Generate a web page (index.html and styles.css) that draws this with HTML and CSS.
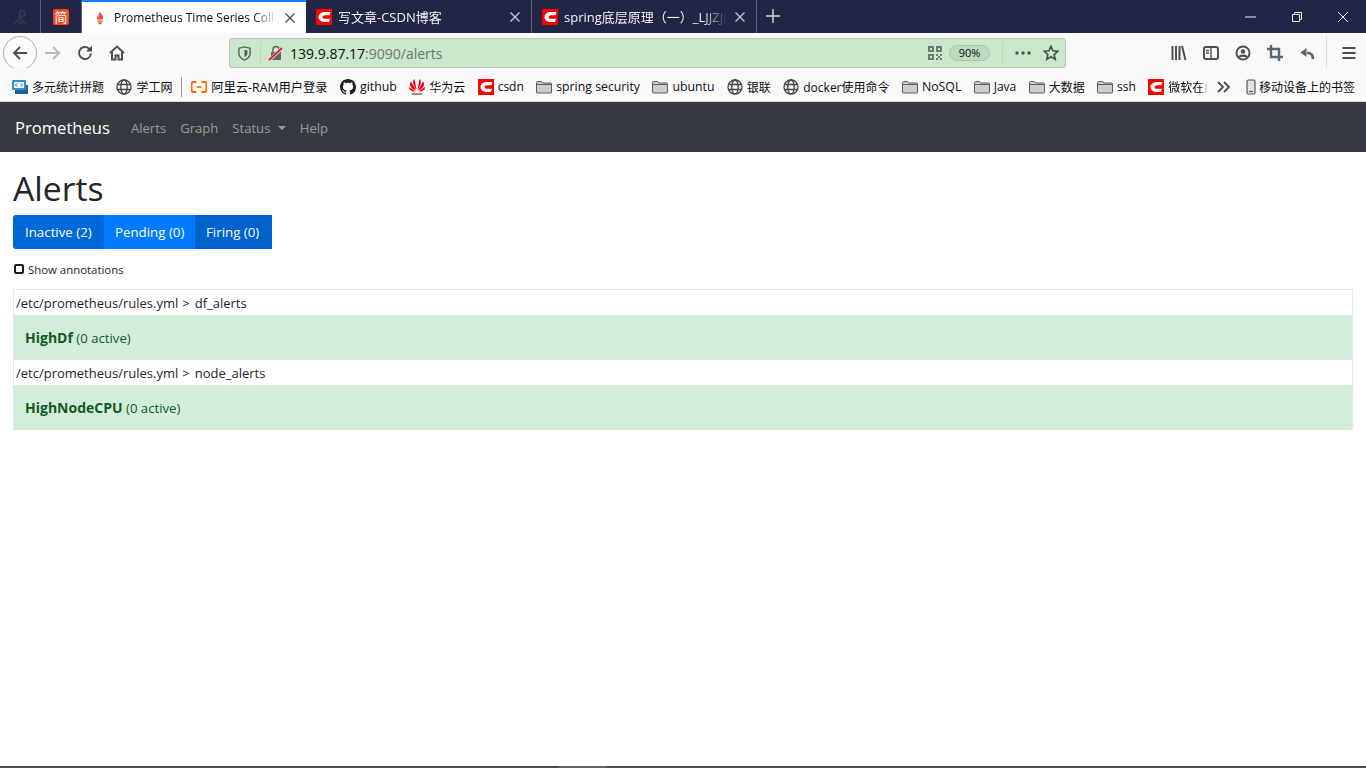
FILE: index.html
```html
<!DOCTYPE html>
<html>
<head>
  <meta charset="UTF-8">
  <title>Prometheus Time Series Collection and Processing Server</title>
  <link rel="stylesheet" href="styles.css">
</head>
<body>
  <svg class="sprites" width="0" height="0">
    <symbol id="csdn" viewBox="0 0 16 16">
      <rect width="16" height="16" fill="#f00"/>
      <path d="M14.500 3H8.500C5.200 3 2.500 5.200 2.500 8s2.700 5 6 5H13l1-3.200H8.800C7.400 9.800 6.500 9 6.500 8s.9-1.800 2.300-1.800h4.700z" fill="#fff"/>
    </symbol>
    <symbol id="globe" viewBox="0 0 16 16">
      <g fill="none" stroke="#444" stroke-width="1.300">
        <circle cx="8" cy="8" r="7"/>
        <ellipse cx="8" cy="8" rx="3.200" ry="7"/>
        <path d="M1.500 5.500h13M1.500 10.500h13"/>
      </g>
    </symbol>
    <symbol id="folder" viewBox="0 0 16 16">
      <path d="M.5 3.500a1 1 0 0 1 1-1h4l1.500 1.500h7.500a1 1 0 0 1 1 1v8a1 1 0 0 1-1 1h-13a1 1 0 0 1-1-1z" fill="#cfcdc9" stroke="#5c5c5c"/>
      <path d="M.5 5.500h15" stroke="#5c5c5c"/>
    </symbol>
  </svg>

  <div class="tabbar">
    <div class="tab tab-pinned">
      <svg class="fav" viewBox="0 0 16 16"><circle cx="10" cy="4.500" r="2.800" fill="none" stroke="#3a3d4d" stroke-width="1.400"/><path d="M1.500 14c3 0 5-2 6.500-6.500 1 3 3 6 6.500 6.500M7 14h4" fill="none" stroke="#3a3d4d" stroke-width="1.400"/></svg>
    </div>
    <div class="tab tab-pinned">
      <span class="jian">简</span>
    </div>
    <div class="tab tab-active">
      <svg class="fav" viewBox="0 0 16 16">
        <circle cx="8" cy="8" r="8" fill="#fff"/>
        <path d="M8 1.500c.4 2 2 2.600 2.700 4.200.7 1.700.2 3.200-.4 3.900H5.700C4.800 8.500 4.700 6.900 5.600 5.700c.3 1 .8 1.200 1 1.200C6.300 5 7 3 8 1.500zM5.300 10.500h5.400v1.300H5.300zM6 12.500h4c0 1.200-.9 2-2 2s-2-.8-2-2z" fill="#e6522c"/>
      </svg>
      <span class="tab-title">Prometheus Time Series Collection and Processing Server</span>
      <svg class="tab-close" viewBox="0 0 10 10"><path d="M.5.500l9 9M9.500.500l-9 9"/></svg>
    </div>
    <div class="tab tab-third">
      <svg class="fav"><use href="#csdn"/></svg>
      <span class="tab-title tab-title-cjk">写文章-CSDN博客</span>
      <svg class="tab-close" viewBox="0 0 10 10"><path d="M.5.500l9 9M9.500.500l-9 9"/></svg>
    </div>
    <div class="tab">
      <svg class="fav"><use href="#csdn"/></svg>
      <span class="tab-title tab-title-cjk">spring底层原理（一）_LJJZJ的博客</span>
      <svg class="tab-close" viewBox="0 0 10 10"><path d="M.5.500l9 9M9.500.500l-9 9"/></svg>
    </div>
    <svg class="new-tab" viewBox="0 0 14 14"><path d="M7 0v14M0 7h14"/></svg>
    <div class="window-controls">
      <svg viewBox="0 0 12 12"><path d="M0 6h11"/></svg>
      <svg viewBox="0 0 12 12"><path d="M1.500 3.500h7v7h-7zM3.500 3.500v-2h7v7h-2"/></svg>
      <svg viewBox="0 0 12 12"><path d="M1 1l10 10M11 1L1 11"/></svg>
    </div>
  </div>

  <div class="toolbar">
    <div class="back-btn">
      <svg viewBox="0 0 16 16"><path d="M15 8H2M8 2L2 8l6 6"/></svg>
    </div>
    <svg class="tool tool-off" viewBox="0 0 16 16"><path d="M0 8h14M8 2l6 6-6 6"/></svg>
    <svg class="tool" viewBox="0 0 16 16"><path d="M14 8.500a6 6 0 1 1-2-5L14.500 5.500"/><path d="M15 .5v6H9z" fill="#4d4f52" stroke="none"/></svg>
    <svg class="tool" viewBox="0 0 16 16"><path d="M1 8l7-6.500L15 8M3 6.500V14.500h3.500v-4h3v4H13V6.500"/></svg>
    <div class="urlbar">
      <svg class="shield" viewBox="0 0 16 16"><path d="M8 1l6 1.500V8c0 3-2.500 5.500-6 7-3.500-1.500-6-4-6-7V2.500z"/><path d="M8 4l3 .8V8c0 1.600-1.300 3-3 4z" fill="#555" stroke="none"/></svg>
      <span class="url-sep"></span>
      <svg class="lock" viewBox="0 0 16 16"><path d="M3 7h10v8H3z" fill="#5d6660"/><path d="M5 7V4.500a3 3 0 0 1 6 0V7" fill="none" stroke="#5d6660" stroke-width="1.500"/><path d="M1 15.500L14.500 2.500" stroke="#cbe8cd" stroke-width="3.200"/><path d="M1 15L14 3" stroke="#f0143c" stroke-width="1.800"/></svg>
      <span class="url"><span class="url-host">139.9.87.17</span>:9090/alerts</span>
      <svg class="qr" viewBox="0 0 14 14"><path d="M0 0h6v6H0zM2 2v2h2V2zM8 0h6v6H8zM10 2v2h2V2zM0 8h6v6H0zM2 10v2h2v-2zM8 8h2v2H8zM12 8h2v2h-2zM10 10h2v2h-2zM8 12h2v2H8zM12 12h2v2h-2z" fill-rule="evenodd"/></svg>
      <span class="zoom-pill">90%</span>
      <span class="url-sep url-sep-right"></span>
      <svg class="dots" viewBox="0 0 16 4"><circle cx="2" cy="2" r="1.700"/><circle cx="8" cy="2" r="1.700"/><circle cx="14" cy="2" r="1.700"/></svg>
      <svg class="star" viewBox="0 0 16 16"><path d="M8 1.300l2 4.500 4.800.5-3.600 3.200 1 4.800L8 11.800l-4.200 2.500 1-4.800L1.200 6.300 6 5.800z"/></svg>
    </div>
    <div class="tools-right">
      <svg class="tool" viewBox="0 0 16 16"><path d="M1.500 1v14M5 1v14M8.500 1v14M11 1l3.500 14"/></svg>
      <svg class="tool" viewBox="0 0 16 16"><rect x="1" y="2" width="14" height="12" rx="2"/><path d="M8 2v12M3 5.500h3M3 8h3" stroke-width="1.400"/></svg>
      <svg class="tool" viewBox="0 0 16 16"><circle cx="8" cy="8" r="6.500" stroke-width="2"/><circle cx="8" cy="6.500" r="2.300" fill="#4d4f52" stroke="none"/><path d="M3.800 12.500c1-2.500 7.400-2.500 8.400 0" stroke-width="2.200"/></svg>
      <svg class="tool tool-slate" viewBox="0 0 16 16"><path d="M4 0v12h12M0 4h12v12" stroke-width="2.400"/></svg>
      <svg class="tool tool-slate" viewBox="0 0 16 16"><path d="M14 14c0-4-2-6-6-6.200" stroke-width="2.600"/><path d="M7.500 3L1.500 7.500l6 4.500z" fill="#58646e" stroke="none"/></svg>
      <span class="tools-sep"></span>
      <svg class="tool menu" viewBox="0 0 16 16"><path d="M1.500 3h13M1.500 8h13M1.500 13h13"/></svg>
    </div>
  </div>

  <div class="bookmarks">
    <a class="bm"><svg class="fav" viewBox="0 0 16 16"><rect x="3" y="6" width="13" height="9" fill="#1d5f96"/><rect y="1" width="14" height="10" rx="1" fill="#2f8fd1"/><rect x="2" y="3" width="10" height="6" fill="#eef6fc"/><path d="M5 4.500L3.500 6 5 7.500M9 4.500L10.500 6 9 7.500" fill="none" stroke="#1d5f96"/></svg>多元统计拼题</a>
    <a class="bm"><svg class="fav"><use href="#globe"/></svg>学工网</a>
    <span class="bm-sep"></span>
    <a class="bm bm-wide"><svg class="fav" viewBox="0 0 16 16"><path d="M5.500 3H2.500A2 2 0 0 0 .5 5v6a2 2 0 0 0 2 2h3M10.500 3h3a2 2 0 0 1 2 2v6a2 2 0 0 1-2 2h-3" fill="none" stroke="#ff6a00" stroke-width="2"/><path d="M5.500 8h5" stroke="#ff6a00" stroke-width="1.600"/></svg>阿里云-RAM用户登录</a>
    <a class="bm bm-wide"><svg class="fav" viewBox="0 0 16 16"><path d="M8 0C3.580 0 0 3.580 0 8c0 3.540 2.290 6.530 5.470 7.590.4.070.55-.17.55-.38 0-.19-.01-.82-.01-1.490-2.010.37-2.530-.49-2.690-.94-.09-.23-.48-.94-.82-1.130-.28-.15-.68-.52-.01-.53.630-.01 1.080.58 1.230.82.720 1.210 1.870.87 2.330.66.070-.52.280-.87.510-1.070-1.780-.2-3.640-.89-3.640-3.950 0-.87.310-1.590.82-2.150-.08-.2-.36-1.020.08-2.120 0 0 .67-.21 2.200.82.640-.18 1.320-.27 2-.27s1.360.09 2 .27c1.530-1.040 2.200-.82 2.200-.82.440 1.100.16 1.920.08 2.120.51.560.82 1.270.82 2.150 0 3.070-1.870 3.750-3.650 3.950.29.250.54.730.54 1.480 0 1.070-.01 1.930-.01 2.200 0 .21.150.46.550.38A8.013 8.013 0 0 0 16 8c0-4.420-3.580-8-8-8z" fill="#1b1f23"/></svg>github</a>
    <a class="bm"><svg class="fav" viewBox="0 0 16 16"><g fill="#e60012"><path d="M7.500 11L5.500 0C3 1.500 4 6.500 7.500 11zM8.500 11l2-11c2.500 1.500 1.500 6.500-2 11z"/><path d="M7 11.500L2 2.500C-.5 5 2 10 7 11.500zM9 11.500l5-9c2.500 2.500 0 7.500-5 9z"/><path d="M6.500 12.500L0 8c-.5 3 3 5 6.500 4.500zM9.500 12.500L16 8c.5 3-3 5-6.500 4.500z"/></g><path d="M3 15h10" stroke="#a55" stroke-width="1.500"/></svg>华为云</a>
    <a class="bm"><svg class="fav"><use href="#csdn"/></svg>csdn</a>
    <a class="bm bm-wide"><svg class="fav"><use href="#folder"/></svg>spring security</a>
    <a class="bm bm-wide"><svg class="fav"><use href="#folder"/></svg>ubuntu</a>
    <a class="bm"><svg class="fav"><use href="#globe"/></svg>银联</a>
    <a class="bm"><svg class="fav"><use href="#globe"/></svg>docker使用命令</a>
    <a class="bm bm-wide"><svg class="fav"><use href="#folder"/></svg>NoSQL</a>
    <a class="bm"><svg class="fav"><use href="#folder"/></svg>Java</a>
    <a class="bm"><svg class="fav"><use href="#folder"/></svg>大数据</a>
    <a class="bm"><svg class="fav"><use href="#folder"/></svg>ssh</a>
    <a class="bm bm-clipped"><svg class="fav"><use href="#csdn"/></svg><span class="bm-fade">微软在线</span></a>
    <svg class="chevrons" viewBox="0 0 14 12"><path d="M1 1l5 5-5 5M7 1l5 5-5 5"/></svg>
    <a class="bm bm-mobile"><svg class="phone" viewBox="0 0 10 16"><rect x="1" y="1" width="8" height="14" rx="1.500"/><path d="M3 12.500h4"/></svg>移动设备上的书签</a>
  </div>

  <nav class="navbar">
    <a class="brand">Prometheus</a>
    <a class="nav-link">Alerts</a>
    <a class="nav-link">Graph</a>
    <a class="nav-link">Status <span class="caret"></span></a>
    <a class="nav-link">Help</a>
  </nav>

  <main class="content">
    <h1>Alerts</h1>
    <div class="btn-group">
      <span class="btn btn-inactive">Inactive (2)</span>
      <span class="btn btn-pending">Pending (0)</span>
      <span class="btn btn-firing">Firing (0)</span>
    </div>
    <label class="annotations"><span class="checkbox"></span>Show annotations</label>
    <div class="rules">
      <div class="rule-file">/etc/prometheus/rules.yml<span class="rule-arrow">&gt;</span>df_alerts</div>
      <div class="rule-row"><b>HighDf</b> (0 active)</div>
      <div class="rule-file">/etc/prometheus/rules.yml<span class="rule-arrow">&gt;</span>node_alerts</div>
      <div class="rule-row"><b>HighNodeCPU</b> (0 active)</div>
    </div>
  </main>

  <div class="taskbar-edge"><span class="taskbar-lit"></span></div>
</body>
</html>
```

FILE: styles.css
```css
* { box-sizing: border-box; }
html, body { height: 100%; }
body {
  margin: 0;
  height: 100vh;
  display: flex;
  flex-direction: column;
  overflow: hidden;
  background: #fff;
  color: #212529;
  font-family: "Open Sans", "Noto Sans CJK SC", sans-serif;
}
.sprites { display: block; height: 0; }
svg { flex: none; display: block; }

/* tab strip */
.tabbar {
  display: flex;
  align-items: stretch;
  height: 33px;
  flex: none;
  background: #222646;
  color: #f2f2f5;
  font-size: 12px;
}
.tab {
  width: 225px;
  display: flex;
  align-items: center;
  padding: 0 11px 0 10px;
  border-right: 1px solid #5f6277;
  white-space: nowrap;
}
.tab-third { width: 226px; }
.tab-pinned { width: 41px; padding: 0 0 0 12px; }
.tab-active {
  width: 224px;
  background: #fff;
  color: #0c0c0d;
  border-right: 0;
  border-top: 2px solid #0a84ff;
}
.tab .fav { width: 16px; height: 16px; margin-right: 6px; }
.tab-pinned .fav { margin: 0; }
.tab-title {
  flex: 1;
  overflow: hidden;
  -webkit-mask-image: linear-gradient(to right, #000 85%, transparent);
  mask-image: linear-gradient(to right, #000 85%, transparent);
}
.tab-title-cjk { font-size: 13px; }
.tab-close {
  width: 10px;
  height: 10px;
  margin-left: 8px;
  stroke: #c7c8d0;
  stroke-width: 1.300;
  fill: none;
}
.tab-active .tab-close { stroke: #4a4a4f; }
.jian {
  display: block;
  width: 16px;
  height: 16px;
  border-radius: 2px;
  background: #f04a23;
  color: #fff;
  font-size: 13px;
  line-height: 16px;
  text-align: center;
}
.new-tab {
  width: 14px;
  height: 14px;
  margin: 9px 0 0 9px;
  stroke: #d4d5dc;
  stroke-width: 1.500;
  fill: none;
}
.window-controls {
  margin-left: auto;
  display: flex;
  align-items: center;
  gap: 34px;
  padding-right: 17px;
}
.window-controls svg {
  width: 12px;
  height: 12px;
  stroke: #f2f2f5;
  stroke-width: 1;
  fill: none;
}

/* toolbar */
.toolbar {
  display: flex;
  align-items: center;
  height: 35px;
  flex: none;
  background: #f9f9fa;
  padding: 5px 0 0 3px;
}
.back-btn {
  width: 34px;
  height: 34px;
  border-radius: 50%;
  border: 1px solid #b1b1b3;
  background: #fbfbfb;
  display: flex;
  align-items: center;
  justify-content: center;
}
.tool {
  width: 16px;
  height: 16px;
  stroke: #4d4f52;
  stroke-width: 2;
  fill: none;
}
.tool-slate { stroke: #58646e; }
.back-btn svg {
  width: 16px;
  height: 16px;
  stroke: #4d4f52;
  stroke-width: 1.800;
  fill: none;
}
.toolbar > .tool { margin-left: 16px; }
.toolbar > .tool-off { margin-left: 8px; stroke: #bcb8b4; stroke-width: 2; }
.urlbar {
  width: 837px;
  height: 30px;
  display: flex;
  align-items: center;
  background: #cbe8cd;
  border: 1px solid #bebebe;
  border-radius: 3px;
  color: #6a766c;
  font-size: 14px;
}
.toolbar > .urlbar { margin-left: 104px; }
.shield {
  width: 15px;
  height: 15px;
  margin-left: 7px;
  stroke: #58635c;
  stroke-width: 1.500;
  fill: none;
}
.url-sep {
  width: 1px;
  height: 22px;
  margin-left: 8px;
  background: #bcd6c0;
}
.lock { width: 16px; height: 16px; margin-left: 7px; }
.url { margin-left: 6px; flex: 1; white-space: nowrap; }
.url-host { color: #0c0c0d; }
.qr { width: 14px; height: 14px; fill: #6e7a70; }
.zoom-pill {
  width: 41px;
  height: 16px;
  margin-left: 7px;
  border-radius: 8px;
  background: #bcdcc0;
  border: 1px solid #abc8af;
  color: #0c0c0d;
  font-size: 11px;
  line-height: 14px;
  text-align: center;
}
.url-sep-right { margin-left: 12px; }
.dots { width: 16px; height: 4px; margin-left: 12px; fill: #4d534e; }
.star {
  width: 16px;
  height: 16px;
  margin: 0 6px 0 12px;
  fill: none;
  stroke: #4d534e;
  stroke-width: 1.700;
}
.tools-right {
  display: flex;
  align-items: center;
  gap: 16px;
  margin-left: 105px;
}
.tools-sep {
  width: 1px;
  height: 34px;
  background: #dcdcde;
  margin-left: -5px;
}
.menu { margin-left: -2px; }

/* bookmarks */
.bookmarks {
  display: flex;
  align-items: center;
  gap: 12.400px;
  height: 34px;
  flex: none;
  padding: 4px 0 0 12px;
  background: #f9f9fa;
  border-bottom: 1px solid #d7d7db;
  color: #0c0c0d;
  font-size: 12px;
  white-space: nowrap;
  overflow: hidden;
}
.bm {
  display: flex;
  align-items: center;
  gap: 4px;
}
.bm-wide { font-size: 12.300px; }
.bm .fav { width: 16px; height: 16px; }
.bm-sep {
  width: 1px;
  height: 20px;
  margin: 0 -3px 0 -4px;
  background: #9a9a9a;
}
.bm-fade {
  width: 40px;
  overflow: hidden;
  -webkit-mask-image: linear-gradient(to right, #000 80%, transparent);
  mask-image: linear-gradient(to right, #000 80%, transparent);
}
.chevrons {
  width: 14px;
  height: 12px;
  margin-left: -4px;
  stroke: #4d4f52;
  stroke-width: 1.800;
  fill: none;
}
.bm-mobile { gap: 3px; margin-left: 3px; }
.phone {
  width: 10px;
  height: 16px;
  stroke: #55585c;
  stroke-width: 1.200;
  fill: #dfe3e6;
}

/* prometheus page */
.navbar {
  display: flex;
  align-items: center;
  height: 50px;
  flex: none;
  padding: 1px 15px 0;
  background: #343a40;
  font-size: 13.100px;
}
.brand { color: #fff; font-size: 16.600px; margin-right: 14px; }
.nav-link { padding: 0 7px; color: rgba(255, 255, 255, 0.5); white-space: nowrap; }
.caret {
  display: inline-block;
  margin-left: 4px;
  vertical-align: 3px;
  border-top: 4px solid;
  border-left: 4px solid transparent;
  border-right: 4px solid transparent;
}
.content { flex: 1; padding: 0 13px; }
h1 {
  margin: 15px 0 5px;
  font-size: 33.700px;
  font-weight: 400;
  line-height: 43px;
  color: #212529;
}
.btn-group { display: flex; }
.btn {
  height: 34px;
  padding: 0 11px;
  color: #fff;
  font-size: 13.300px;
  line-height: 34px;
  white-space: nowrap;
}
.btn-inactive { background: #0069d9; border-radius: 3px 0 0 3px; width: 91px; padding-left: 12px; }
.btn-pending { background: #007bff; width: 91px; }
.btn-firing { background: #0062cc; width: 77px; }
.annotations {
  display: flex;
  align-items: center;
  gap: 4px;
  margin: 13px 0 13px 1px;
  height: 14px;
  font-size: 11.400px;
}
.checkbox {
  width: 10px;
  height: 10px;
  border: 2px solid #1c1e21;
  border-radius: 2px;
}
.rules {
  border: 1px solid #e5e7ea;
  border-bottom: 0;
  width: 1340px;
  font-size: 13px;
}
.rule-file {
  height: 25px;
  padding-left: 2px;
  line-height: 26px;
}
.rule-arrow { margin: 0 5px 0 4px; }
.rule-row {
  height: 45px;
  padding-left: 11px;
  background: #d2eeda;
  color: #155724;
  font-size: 13.200px;
  line-height: 45px;
}
.rule-row b { font-size: 14px; }
.taskbar-edge {
  flex: none;
  height: 2px;
  padding-left: 559px;
  background: #4b4b4b;
}
.taskbar-lit {
  display: block;
  width: 48px;
  height: 2px;
  background: #66665f;
}
```
